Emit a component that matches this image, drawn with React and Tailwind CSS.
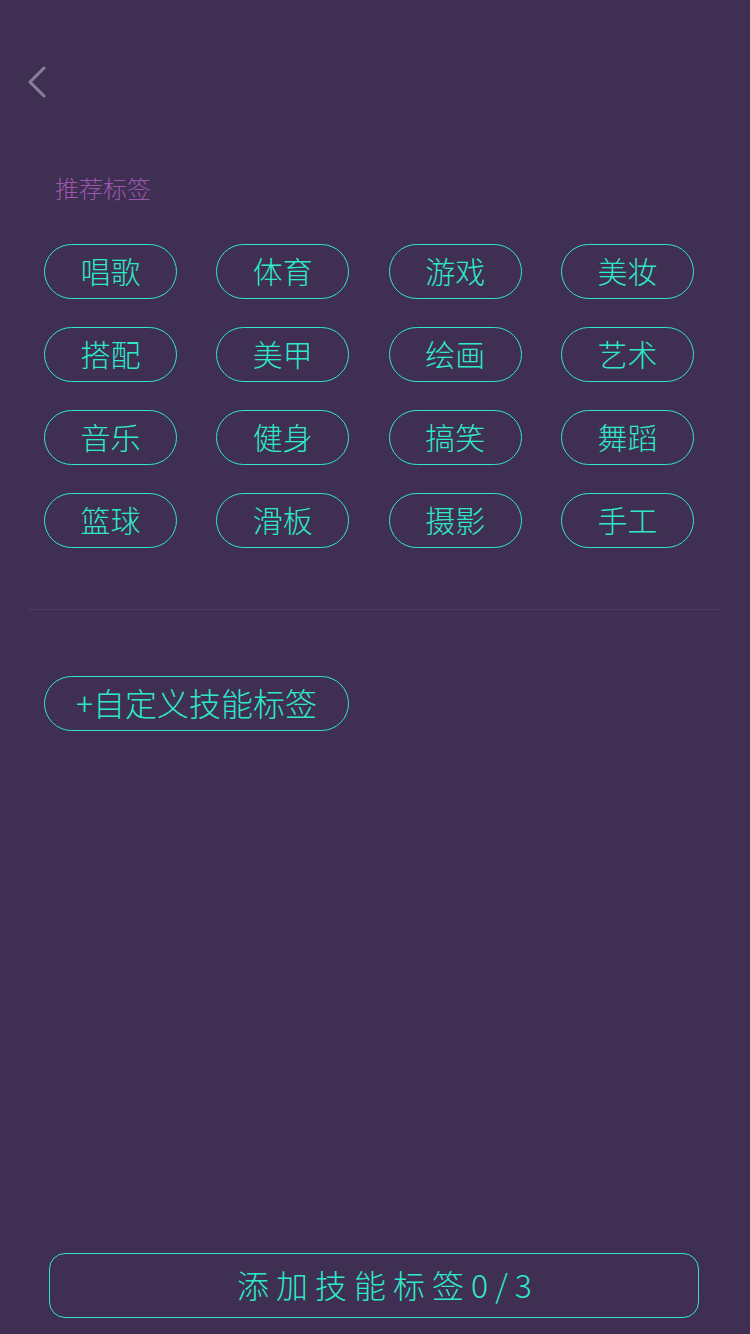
import React from "react";

const tags = ["唱歌","体育","游戏","美妆","搭配","美甲","绘画","艺术","音乐","健身","搞笑","舞蹈","篮球","滑板","摄影","手工"];

export default function App() {
  return (
    <div className="w-[750px] h-[1334px] bg-[#3f2f52] flex flex-col relative font-light" style={{fontFamily: '"Noto Sans CJK SC", "Noto Sans", sans-serif'}}>
      <div className="h-[158px] flex items-start">
        <svg className="mt-[66px] ml-[26px]" width="22" height="32" viewBox="0 0 22 32" fill="none">
          <path d="M18 2 L4 16 L18 30" stroke="#8b7f98" strokeWidth="3" strokeLinecap="round" strokeLinejoin="round" />
        </svg>
      </div>
      <div className="pl-[55px] text-[24px] leading-[60px] text-[#9c56ad]">推荐标签</div>
      <div className="mt-[26px] px-[44px] grid grid-cols-4 gap-x-[39.33px] gap-y-[28px] w-[738px]">
        {tags.map((t) => (
          <div key={t} className="h-[55px] pb-[3px] rounded-full border border-[#2ee8c8] flex items-center justify-center text-[30px] text-[#2ee8c8] leading-none">
            {t}
          </div>
        ))}
      </div>
      <div className="mt-[61px] ml-[28px] mr-[30px] h-px bg-[#4e3f62]" />
      <div className="mt-[66px] px-[44px]">
        <div className="w-[305px] h-[55px] pb-[3px] rounded-full border border-[#2ee8c8] flex items-center justify-center text-[32px] text-[#2ee8c8] leading-none">
          +自定义技能标签
        </div>
      </div>
      <div className="flex-1" />
      <div className="px-[49px] pb-[16px]">
        <div className="w-[650px] h-[65px] pb-[3px] rounded-[16px] border border-[#2ee8c8] flex items-center justify-center text-[32px] tracking-[7px] pl-[28px] text-[#2ee8c8] leading-none">
          添加技能标签0/3
        </div>
      </div>
    </div>
  );
}
